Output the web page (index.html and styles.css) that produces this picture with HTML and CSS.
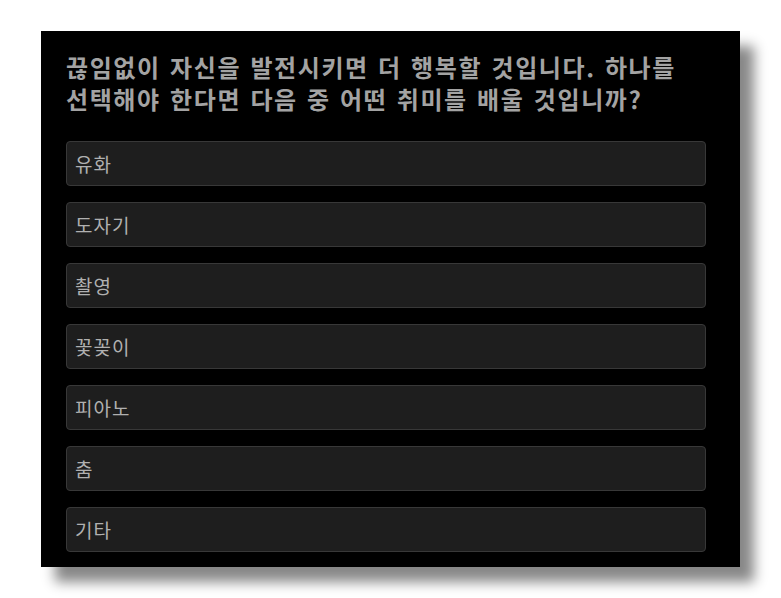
FILE: index.html
```html
<!DOCTYPE html>
<html lang="ko">
<head>
<meta charset="utf-8">
<link rel="stylesheet" href="styles.css">
</head>
<body>
<div class="card">
  <h1 class="question">끊임없이 자신을 발전시키면 더 행복할 것입니다. 하나를<br>선택해야 한다면 다음 중 어떤 취미를 배울 것입니까?</h1>
  <div class="options">
    <div class="option">유화</div>
    <div class="option">도자기</div>
    <div class="option">촬영</div>
    <div class="option">꽃꽂이</div>
    <div class="option">피아노</div>
    <div class="option">춤</div>
    <div class="option">기타</div>
  </div>
</div>
</body>
</html>
```

FILE: styles.css
```css
html, body {
  margin: 0;
  background: #ffffff;
}
body {
  box-sizing: border-box;
  min-height: 598px;
  padding: 31px 0 31px 41px;
  font-family: "Noto Sans CJK KR", "Noto Sans", sans-serif;
}
.card {
  box-sizing: border-box;
  width: 699px;
  height: 536px;
  background: #000000;
  padding: 20px 34px 15px 25px;
  box-shadow: 14px 15px 12px rgba(0, 0, 0, 0.47);
}
.question {
  margin: 0 0 26px 0;
  font-size: 24px;
  line-height: 32px;
  font-weight: 700;
  color: #a3a3a3;
  letter-spacing: 1.6px;
  word-spacing: 1px;
  white-space: nowrap;
}
.options {
  display: flex;
  flex-direction: column;
  gap: 16px;
}
.option {
  box-sizing: border-box;
  height: 45px;
  display: flex;
  align-items: center;
  padding-left: 8px;
  background: #1e1e1e;
  border: 1px solid #383838;
  border-radius: 4px;
  color: #b0b0b0;
  font-size: 19px;
  letter-spacing: 1px;
}
```
